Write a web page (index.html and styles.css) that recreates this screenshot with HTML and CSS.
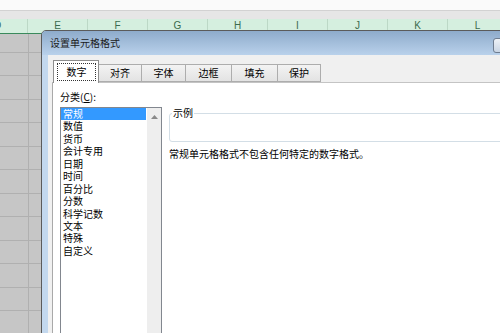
FILE: index.html
```html
<!DOCTYPE html>
<html lang="zh">
<head>
<meta charset="utf-8">
<title>设置单元格格式</title>
<link rel="stylesheet" href="styles.css">
</head>
<body>
<div class="app">
  <div class="top"></div>
  <div class="strip"></div>
  <div class="colhead">
    <div class="col">D</div>
    <div class="col">E</div>
    <div class="col">F</div>
    <div class="col">G</div>
    <div class="col">H</div>
    <div class="col">I</div>
    <div class="col">J</div>
    <div class="col">K</div>
    <div class="col">L</div>
  </div>
  <div class="sheet"></div>

  <div class="dialog">
    <div class="titlebar">
      <span class="title">设置单元格格式</span>
      <span class="close"></span>
    </div>
    <div class="client">
      <div class="tabs">
        <div class="tab active"><span class="focus">数字</span></div>
        <div class="tab t2">对齐</div>
        <div class="tab t3">字体</div>
        <div class="tab t4">边框</div>
        <div class="tab t5">填充</div>
        <div class="tab t6">保护</div>
      </div>
      <div class="panel">
        <div class="leftcol">
          <div class="label">分类(<u>C</u>):</div>
          <div class="listbox">
            <div class="items">
              <div class="item sel">常规</div>
              <div class="item">数值</div>
              <div class="item">货币</div>
              <div class="item">会计专用</div>
              <div class="item">日期</div>
              <div class="item">时间</div>
              <div class="item">百分比</div>
              <div class="item">分数</div>
              <div class="item">科学记数</div>
              <div class="item">文本</div>
              <div class="item">特殊</div>
              <div class="item">自定义</div>
            </div>
            <div class="scroll">
              <svg class="arrow" width="7" height="4" viewBox="0 0 7 4"><path d="M0 4 L3.5 0 L7 4 Z" fill="#8a8a8a"/></svg>
            </div>
          </div>
        </div>
        <div class="rightcol">
          <fieldset class="sample">
            <legend>示例</legend>
            <div class="sample-body"></div>
          </fieldset>
          <div class="desc">常规单元格格式不包含任何特定的数字格式。</div>
        </div>
      </div>
    </div>
  </div>
</div>
</body>
</html>
```

FILE: styles.css
```css
* { box-sizing: border-box; }
html, body { margin: 0; padding: 0; }
body {
  font-family: "Noto Sans CJK SC", "Liberation Sans", sans-serif;
  font-size: 10px;
  color: #000;
  background: #fff;
}
.app {
  position: relative;
  width: 500px;
  height: 333px;
  overflow: hidden;
  display: flex;
  flex-direction: column;
}
.top { height: 10px; background: #fafafa; flex: none; }
.strip {
  height: 9px;
  background: #e6e6e6;
  border-top: 1px solid #d2d2d2;
  flex: none;
}
.colhead {
  height: 15px;
  flex: none;
  display: flex;
  margin-left: -32px;
  background: #d5efdf;
  border-bottom: 1px solid #3a8a5c;
}
.col {
  flex: none;
  width: 60px;
  border-right: 1px solid #bcd8c6;
  text-align: center;
  font-family: "Liberation Sans", sans-serif;
  font-size: 10px;
  line-height: 14px;
  color: #3b6b4e;
}
.sheet {
  flex: 1;
  background-color: #c6c6c6;
  background-image:
    repeating-linear-gradient(90deg, transparent 0 28px, #b0b0b0 28px 29px, transparent 29px 60px),
    repeating-linear-gradient(180deg, transparent 0 17.5px, #b0b0b0 17.5px 18.5px, transparent 18.5px 23.5px);
}

/* dialog window */
.dialog {
  position: absolute;
  left: 41px;
  top: 30px;
  width: 482px;
  height: 320px;
  border: 1px solid #5b5b5b;
  border-radius: 5px 5px 0 0;
  background: #c3d8ee;
  display: flex;
  flex-direction: column;
  overflow: visible;
}
.titlebar {
  height: 24px;
  flex: none;
  display: flex;
  align-items: flex-start;
  padding-left: 8px;
  background: linear-gradient(#8eabcb, #b9d1eb);
  border-radius: 4px 4px 0 0;
}
.title {
  line-height: 24px;
  font-size: 10px;
  color: #1c1c1c;
}
.close {
  margin-left: auto;
  margin-right: 5px;
  margin-top: 7px;
  width: 24px;
  height: 15px;
  border: 1px solid #6f7d90;
  border-radius: 3px;
  background: linear-gradient(#eef2f7, #c9d5e4);
}
.client {
  flex: 1;
  margin-left: 6px;
  background: #f0f0f0;
  padding: 5px 0 0 4px;
  display: flex;
  flex-direction: column;
}
.tabs {
  height: 22px;
  flex: none;
  display: flex;
  align-items: flex-end;
  padding-left: 1px;
  position: relative;
  z-index: 1;
}
.tab {
  height: 18px;
  line-height: 16px;
  text-align: center;
  background: linear-gradient(#f3f3f3, #e3e3e3);
  border: 1px solid #adadad;
  border-left: none;
  width: 44px;
  color: #000;
}
.tab.t2 { width: 43px; }
.tab.t3 { width: 44px; }
.tab.t4 { width: 46px; }
.tab.t5 { width: 46px; }
.tab.t6 { width: 43px; }
.tab.active {
  width: 46px;
  height: 23px;
  margin-bottom: -1px;
  background: #fff;
  border: 1px solid #8d8d8d;
  border-bottom: none;
  padding: 2px 2px 0 3px;
}
.focus {
  display: block;
  height: 18px;
  line-height: 16px;
  border: 1px dotted #333;
}
.panel {
  flex: 1;
  background: #fff;
  border-top: 1px solid #c4c4c4;
  border-left: 1px solid #a9a9a9;
  padding: 8px 0 0 7px;
  display: grid;
  grid-template-columns: 102px 1fr;
  column-gap: 7px;
  align-items: start;
}
.label {
  line-height: 12px;
  height: 12px;
}
.label u { text-decoration: underline; }
.listbox {
  margin-top: 4px;
  height: 260px;
  border: 1px solid #82878f;
  display: flex;
  background: #fff;
}
.items {
  flex: 1;
  padding-right: 1px;
}
.item {
  line-height: 12.45px;
  height: 12.45px;
  padding-left: 2px;
  white-space: nowrap;
}
.item.sel {
  background: #3399ff;
  color: #fff;
}
.scroll {
  flex: none;
  width: 14px;
  background: #eeeeee;
  display: flex;
  justify-content: center;
  padding-top: 7px;
}
.arrow { display: block; }
.rightcol {
  padding-top: 16px;
}
.sample {
  margin: 0;
  padding: 0;
  width: 360px;
  border: 1px solid #d3dee6;
  border-radius: 3px;
}
.sample legend {
  padding: 0 1px;
  margin-left: 2px;
  line-height: 12px;
  font-size: 10px;
}
.sample-body { height: 22px; }
.desc {
  margin-top: 6px;
  line-height: 12px;
  white-space: nowrap;
}
```
